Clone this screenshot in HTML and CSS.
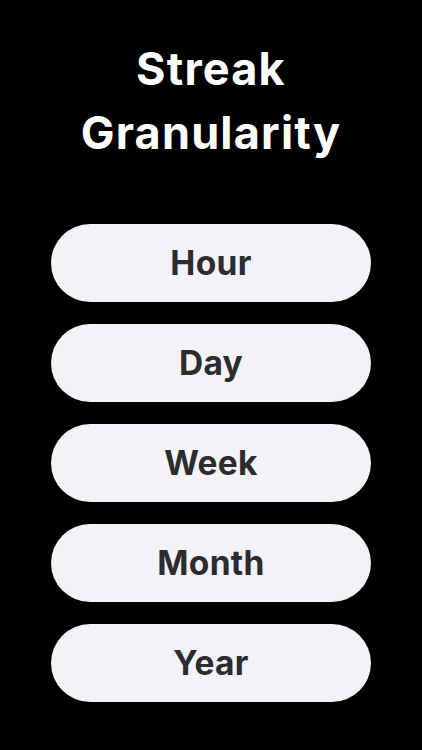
FILE: index.html
```html
<!DOCTYPE html>
<html lang="en">
<head>
  <meta charset="UTF-8" />
  <meta name="viewport" content="width=device-width, initial-scale=1.0" />
  <title>Streak Granularity</title>
  <link rel="stylesheet" href="styles.css">
</head>
<body>
  <div class="screen">
    <h1 class="title">Streak<br>Granularity</h1>

    <div class="options">
      <button class="option">Hour</button>
      <button class="option">Day</button>
      <button class="option">Week</button>
      <button class="option">Month</button>
      <button class="option">Year</button>
    </div>
  </div>
</body>
</html>
```

FILE: styles.css
```css
body {
  background-color: #000;
  font-family: Inter, 'Noto Sans', sans-serif;
  margin: 0;
  padding: 0;
}
.screen {
  display: flex;
  flex-direction: column;
  align-items: center;
  height: 750px;
}
.title {
  color: #fff;
  font-size: 45px;
  font-weight: 700;
  letter-spacing: 1.2px;
  line-height: 64px;
  text-align: center;
  margin: 37px 0 0 0;
}
.options {
  display: flex;
  flex-direction: column;
  gap: 22px;
  margin-top: 59px;
}
.option {
  width: 320px;
  height: 78px;
  border: none;
  border-radius: 39px;
  background-color: #f2f2f7;
  color: #2c2c2e;
  font-family: inherit;
  font-size: 33.5px;
  font-weight: 700;
  letter-spacing: 0.3px;
  cursor: pointer;
}
```
